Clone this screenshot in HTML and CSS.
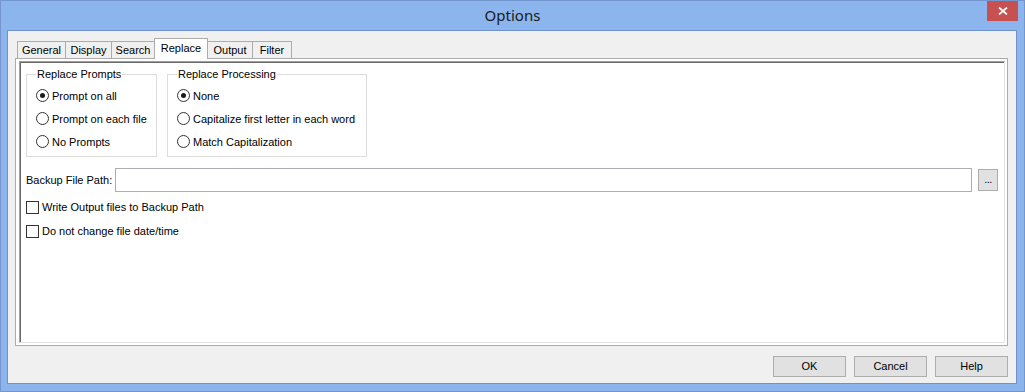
FILE: index.html
```html
<!DOCTYPE html>
<html>
<head>
<meta charset="utf-8">
<title>Options</title>
<link rel="stylesheet" href="styles.css">
</head>
<body>
<div class="window">
  <div class="titlebar">
    <div class="title-spacer"></div>
    <div class="title">Options</div>
    <div class="title-right">
      <div class="close-btn">
        <svg width="10" height="8" viewBox="0 0 10 8"><path d="M1 0.5 L9 7.5 M9 0.5 L1 7.5" stroke="#fff" stroke-width="1.7" fill="none"/></svg>
      </div>
    </div>
  </div>
  <div class="client">
    <div class="tabs">
      <div class="tab t-general">General</div>
      <div class="tab t-display">Display</div>
      <div class="tab t-search">Search</div>
      <div class="tab t-replace active">Replace</div>
      <div class="tab t-output">Output</div>
      <div class="tab t-filter">Filter</div>
    </div>
    <div class="tab-page">
      <div class="sunken">
        <div class="groups">
          <fieldset class="group g-prompts">
            <legend>Replace Prompts</legend>
            <div class="opt"><span class="radio checked"></span><span>Prompt on all</span></div>
            <div class="opt"><span class="radio"></span><span>Prompt on each file</span></div>
            <div class="opt"><span class="radio"></span><span>No Prompts</span></div>
          </fieldset>
          <fieldset class="group g-processing">
            <legend>Replace Processing</legend>
            <div class="opt"><span class="radio checked"></span><span>None</span></div>
            <div class="opt"><span class="radio"></span><span>Capitalize first letter in each word</span></div>
            <div class="opt"><span class="radio"></span><span>Match Capitalization</span></div>
          </fieldset>
        </div>
        <div class="path-row">
          <span class="path-label">Backup File Path:</span>
          <div class="path-input"></div>
          <div class="browse-btn">...</div>
        </div>
        <div class="checks">
          <div class="check-row"><span class="checkbox"></span><span>Write Output files to Backup Path</span></div>
          <div class="check-row"><span class="checkbox"></span><span>Do not change file date/time</span></div>
        </div>
      </div>
    </div>
    <div class="buttons">
      <div class="btn">OK</div>
      <div class="btn">Cancel</div>
      <div class="btn">Help</div>
    </div>
  </div>
</div>
</body>
</html>
```

FILE: styles.css
```css
* { box-sizing: border-box; }
html, body { margin: 0; padding: 0; }
body {
  width: 1025px;
  height: 392px;
  overflow: hidden;
  font-family: "Liberation Sans", Arial, sans-serif;
  font-size: 11px;
  color: #000;
}
.window {
  width: 1025px;
  height: 392px;
  background: #8bb5ec;
  border: 1px solid #7396cf;
  display: flex;
  flex-direction: column;
}
.titlebar {
  height: 29px;
  display: grid;
  grid-template-columns: 1fr auto 1fr;
  align-items: start;
}
.title {
  font-family: "Noto Sans", sans-serif;
  font-size: 15px;
  line-height: 29px;
  color: #1a1a1a;
}
.title-right { display: flex; justify-content: flex-end; }
.close-btn {
  width: 31px;
  height: 20px;
  margin-right: 6px;
  background: #c75050;
  display: flex;
  align-items: center;
  justify-content: center;
}
.close-btn svg { display: block; }
.client {
  flex: 1;
  margin: 0 7px 7px 6px;
  border: 1px solid #6f92cb;
  background: #f0f0f0;
  padding: 7px 8px 6px 7px;
  display: flex;
  flex-direction: column;
}
.tabs {
  display: flex;
  align-items: flex-end;
  height: 21px;
  margin-bottom: -1px;
  padding-left: 2px;
  position: relative;
  z-index: 1;
}
.tab {
  height: 17px;
  margin-bottom: 1px;
  border: 1px solid #acacac;
  border-bottom: none;
  background: #f0f0f0;
  margin-left: -1px;
  text-align: center;
  line-height: 16px;
  white-space: nowrap;
}
.tab:first-child { margin-left: 0; }
.tab.active {
  height: 21px;
  margin-bottom: 0;
  background: #fff;
  line-height: 18px;
  z-index: 2;
}
.t-general { width: 49px; }
.t-display { width: 47px; }
.t-search { width: 44px; }
.t-replace { width: 54px; }
.t-output { width: 46px; }
.t-filter { width: 40px; }
.tab-page {
  height: 288px;
  border: 1px solid #acacac;
  background: #fff;
  padding: 2px 2px 2px 3px;
}
.sunken {
  height: 100%;
  border-top: 1px solid #a0a0a0;
  border-left: 1px solid #a0a0a0;
  border-right: 1px solid #e3e3e3;
  border-bottom: 1px solid #e3e3e3;
  box-shadow: inset 1px 1px 0 #696969;
  padding: 1px 6px 0 6px;
}
.groups {
  display: flex;
  gap: 10px;
  margin-top: 4px;
}
.group {
  margin: 0;
  border: 1px solid #dcdcdc;
  padding: 2px 0 3px 9px;
  min-width: 0;
}
.g-prompts { width: 131px; }
.g-processing { width: 200px; }
.group legend {
  padding: 0 1px;
  line-height: 15px;
  white-space: nowrap;
}
.opt {
  height: 23px;
  display: flex;
  align-items: center;
  white-space: nowrap;
}
.radio {
  width: 13px;
  height: 13px;
  border: 1px solid #333;
  border-radius: 50%;
  background: #fff;
  margin-right: 3px;
  display: flex;
  align-items: center;
  justify-content: center;
  flex: none;
}
.radio.checked::after {
  content: "";
  width: 5px;
  height: 5px;
  border-radius: 50%;
  background: #1a1a1a;
}
.path-row {
  display: flex;
  align-items: center;
  margin-top: 11px;
  height: 24px;
}
.path-label { width: 89px; flex: none; white-space: nowrap; }
.path-input {
  flex: 1;
  height: 24px;
  border: 1px solid #abadb3;
  background: #fff;
}
.browse-btn {
  width: 20px;
  height: 22px;
  margin-left: 6px;
  border: 1px solid #adadad;
  background: #e1e1e1;
  text-align: center;
  line-height: 18px;
  letter-spacing: -0.5px;
}
.checks { margin-top: 3px; }
.check-row {
  height: 24px;
  display: flex;
  align-items: center;
  white-space: nowrap;
}
.checkbox {
  width: 13px;
  height: 13px;
  border: 1px solid #333;
  background: #fff;
  margin-right: 3px;
  flex: none;
}
.buttons {
  display: flex;
  justify-content: flex-end;
  gap: 8px;
  margin-top: 10px;
}
.btn {
  width: 73px;
  height: 21px;
  border: 1px solid #adadad;
  background: #e1e1e1;
  text-align: center;
  line-height: 19px;
}
```
